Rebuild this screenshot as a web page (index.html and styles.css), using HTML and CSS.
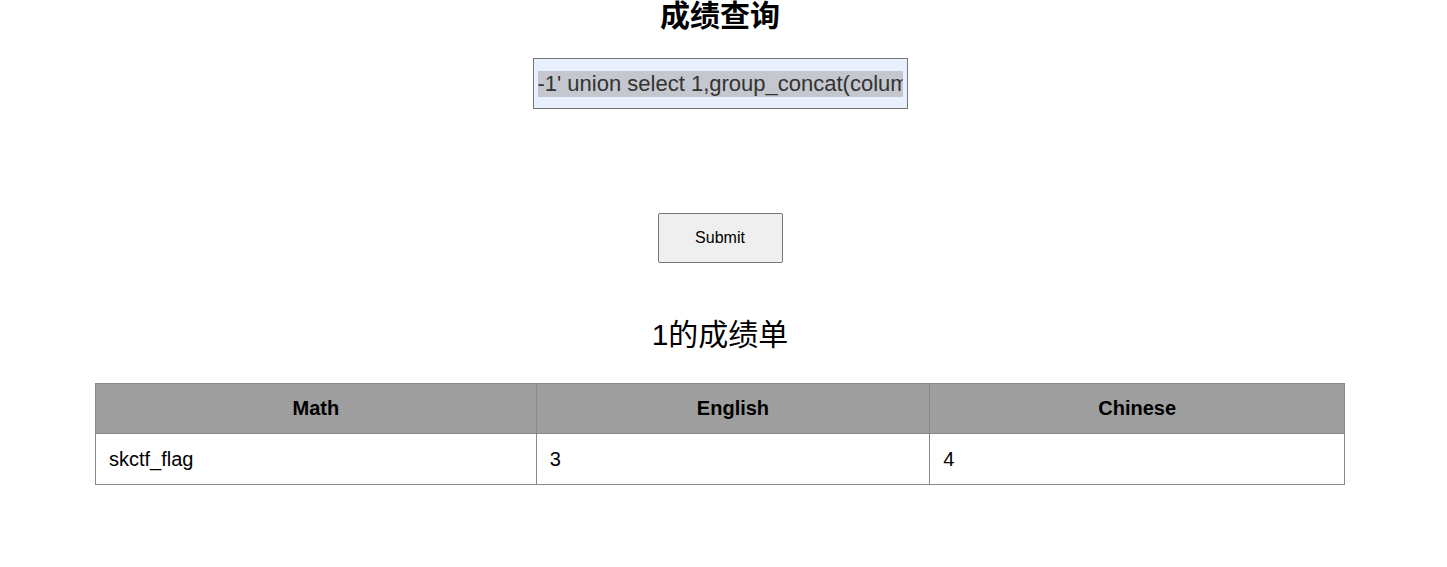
FILE: index.html
```html
<!DOCTYPE html>
<html lang="zh">
<head>
<meta charset="utf-8">
<title>成绩查询</title>
<link rel="stylesheet" href="styles.css">
</head>
<body>
<main class="page">
  <h1 class="title">成绩查询</h1>
  <form class="query">
    <div class="field"><span class="sel">-1' union select 1,group_concat(colum</span></div>
    <button type="button" class="submit">Submit</button>
  </form>
  <h2 class="subtitle">1的成绩单</h2>
  <table class="scores">
    <thead>
      <tr><th class="c1">Math</th><th class="c2">English</th><th class="c3">Chinese</th></tr>
    </thead>
    <tbody>
      <tr><td>skctf_flag</td><td>3</td><td>4</td></tr>
    </tbody>
  </table>
</main>
</body>
</html>
```
FILE: styles.css
```css
html, body {
  margin: 0;
  padding: 0;
  background: #fff;
}
body {
  font-family: "Liberation Sans", Arial, "Noto Sans CJK SC", sans-serif;
  color: #000;
}
.page {
  width: 1440px;
  display: flex;
  flex-direction: column;
  align-items: center;
}
.title {
  margin: 0;
  font-size: 30px;
  line-height: 32px;
  font-weight: bold;
  height: 32px;
}
.query {
  display: flex;
  flex-direction: column;
  align-items: center;
  margin-top: 26px;
}
.field {
  box-sizing: border-box;
  width: 375px;
  height: 51px;
  border: 1px solid #767676;
  background: #e8f0fe;
  padding: 0 4px;
  display: flex;
  align-items: center;
  overflow: hidden;
  white-space: nowrap;
  font-size: 22px;
  color: #333;
}
.sel {
  background: #c4c7cd;
  line-height: 26px;
  display: block;
  width: 365px;
  overflow: hidden;
  white-space: nowrap;
}
.submit {
  margin-top: 104px;
  box-sizing: border-box;
  width: 125px;
  height: 50px;
  border: 1px solid #767676;
  border-radius: 2px;
  background: #efefef;
  font-family: "Liberation Sans", Arial, sans-serif;
  font-size: 16px;
  color: #000;
}
.subtitle {
  margin: 52px 0 0;
  font-size: 30px;
  font-weight: normal;
  line-height: 40px;
  height: 40px;
}
.scores {
  margin-top: 28px;
  width: 1250px;
  border-collapse: collapse;
  font-size: 20px;
}
.scores th, .scores td {
  border: 1px solid #888;
  height: 50px;
  box-sizing: border-box;
  padding: 0 13px;
}
.scores td {
  height: 51px;
  text-align: left;
}
.scores th {
  background: #9e9e9e;
  font-weight: bold;
  text-align: center;
}
.c1 { width: 441px; }
.c2 { width: 394px; }
.c3 { width: 415px; }
```
